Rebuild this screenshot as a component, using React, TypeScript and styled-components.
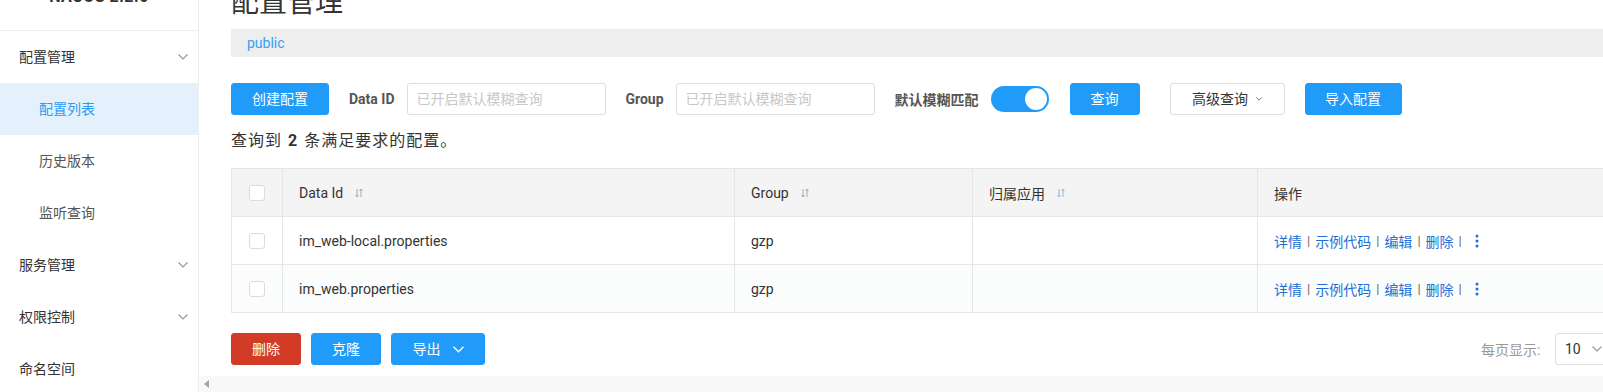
import React from "react";
import styled, { createGlobalStyle, css } from "styled-components";

const GlobalStyle = createGlobalStyle`
  html, body { margin: 0; padding: 0; background: #fff; }
  body {
    font-family: Roboto, "Noto Sans CJK SC", sans-serif;
    font-size: 14px;
    color: #333;
    overflow: hidden;
  }
  * { box-sizing: border-box; }
`;

const PRIMARY = "#209bfa";

const Page = styled.div`
  display: flex;
  width: 1603px;
  height: 392px;
  overflow: hidden;
`;

const Sidebar = styled.nav`
  width: 199px;
  flex-shrink: 0;
  border-right: 1px solid #eee;
  display: flex;
  flex-direction: column;
  overflow: hidden;
`;

const Brand = styled.div`
  height: 61px;
  margin-top: -30px;
  flex-shrink: 0;
  border-bottom: 1px solid #eee;
  display: flex;
  align-items: center;
  justify-content: center;
  padding-bottom: 8px;
  font-size: 16px;
  font-weight: 700;
  letter-spacing: 0.5px;
  color: #333;
`;

const MenuItem = styled.div<{ $sub?: boolean; $active?: boolean }>`
  height: 52px;
  flex-shrink: 0;
  display: flex;
  align-items: center;
  justify-content: space-between;
  padding-left: ${(p) => (p.$sub ? 39 : 19)}px;
  padding-right: 10px;
  font-size: 14px;
  line-height: 20px;
  color: ${(p) => (p.$active ? "#2d9cf6" : p.$sub ? "#555" : "#333")};
  background: ${(p) => (p.$active ? "#e4f1fc" : "transparent")};
`;

const Main = styled.main`
  flex: 1;
  min-width: 0;
  display: flex;
  flex-direction: column;
  overflow: hidden;
`;

const ScrollArea = styled.div`
  flex: 1;
  overflow: hidden;
  padding-left: 32px;
`;

const Inner = styled.div`
  width: 1500px;
  display: flex;
  flex-direction: column;
`;

const Title = styled.h1`
  margin: -15px 0 0;
  font-size: 28px;
  line-height: 36px;
  font-weight: 400;
  color: #333;
`;

const NamespaceBar = styled.div`
  margin-top: 8px;
  height: 28px;
  background: #eee;
  display: flex;
  align-items: center;
  padding-left: 16px;
  font-size: 14px;
  color: #33a0f7;
  width: 1400px;
`;

const Toolbar = styled.div`
  margin-top: 26px;
  height: 32px;
  display: flex;
  align-items: center;
`;

const Button = styled.button<{ $variant?: "primary" | "normal" | "danger"; $w: number; $ml?: number }>`
  width: ${(p) => p.$w}px;
  height: 32px;
  margin-left: ${(p) => p.$ml ?? 0}px;
  flex-shrink: 0;
  border-radius: 3px;
  font-family: inherit;
  font-size: 14px;
  line-height: 20px;
  padding: 0;
  display: inline-flex;
  align-items: center;
  justify-content: center;
  cursor: pointer;
  ${(p) =>
    p.$variant === "normal"
      ? css`
          background: #fff;
          border: 1px solid #ddd;
          color: #333;
        `
      : p.$variant === "danger"
      ? css`
          background: #d23c27;
          border: 1px solid #d23c27;
          color: #fff;
        `
      : css`
          background: ${PRIMARY};
          border: 1px solid ${PRIMARY};
          color: #fff;
        `}
`;

const Label = styled.span<{ $ml: number }>`
  margin-left: ${(p) => p.$ml}px;
  margin-right: 12px;
  font-size: 14px;
  font-weight: 700;
  color: #555;
  white-space: nowrap;
`;

const Input = styled.input`
  width: 199px;
  height: 32px;
  border: 1px solid #ddd;
  border-radius: 3px;
  padding: 0 9px;
  font-family: inherit;
  font-size: 14px;
  color: #333;
  outline: none;
  &::placeholder { color: #c8c8c8; }
`;

const Toggle = styled.div`
  width: 58px;
  height: 26px;
  border-radius: 13px;
  background: ${PRIMARY};
  display: flex;
  align-items: center;
  justify-content: flex-end;
  padding: 0 2px;
`;

const Knob = styled.span`
  width: 22px;
  height: 22px;
  border-radius: 50%;
  background: #fff;
`;

const BtnIcon = styled.svg<{ $gap: number }>`
  margin-left: ${(p) => p.$gap}px;
`;

const Summary = styled.div`
  margin-top: 14px;
  font-size: 16px;
  line-height: 24px;
  letter-spacing: 1px;
  color: #333;
  strong { font-weight: 700; margin: 0 1px; }
`;

const Table = styled.table`
  margin-top: 15px;
  width: 1500px;
  table-layout: fixed;
  border-collapse: collapse;
  border: 1px solid #e6e6e6;
`;

const Th = styled.th`
  height: 48px;
  background: #f4f4f4;
  border: 1px solid #e6e6e6;
  text-align: left;
  font-weight: 400;
  font-size: 14px;
  color: #333;
  padding: 0 16px;
`;

const Tr = styled.tr<{ $alt?: boolean }>`
  background: ${(p) => (p.$alt ? "#fbfcfc" : "#fff")};
`;

const Td = styled.td`
  height: 48px;
  border: 1px solid #e6e6e6;
  padding: 0 16px;
  font-size: 14px;
  color: #333;
  white-space: nowrap;
`;

const CheckCell = styled.div`
  display: flex;
  justify-content: center;
  margin: 0 -16px;
`;

const Checkbox = styled.span`
  width: 16px;
  height: 16px;
  border: 1px solid #dcdcdc;
  border-radius: 3px;
  background: #fff;
`;

const HeadInner = styled.span`
  display: inline-flex;
  align-items: center;
  gap: 12px;
`;

const Ops = styled.div`
  display: flex;
  align-items: center;
  color: #1f6fd4;
  font-size: 14px;
`;

const Sep = styled.span`
  color: #666;
  margin: 0 5px;
  font-size: 13px;
`;

const BottomBar = styled.div`
  margin-top: 20px;
  width: 1500px;
  display: flex;
  justify-content: space-between;
  align-items: center;
`;

const ButtonGroup = styled.div`
  display: flex;
  align-items: center;
`;

const Pager = styled.div`
  display: flex;
  align-items: center;
  width: 250px;
`;

const PagerLabel = styled.span`
  color: #999;
  font-size: 14px;
  width: 74px;
  white-space: nowrap;
`;

const Select = styled.div`
  width: 56px;
  height: 32px;
  flex-shrink: 0;
  border: 1px solid #ddd;
  border-radius: 3px;
  display: flex;
  align-items: center;
  justify-content: space-between;
  padding: 0 8px 0 9px;
  font-size: 14px;
  color: #333;
`;

const PageNums = styled.div`
  margin-left: 16px;
  display: flex;
  gap: 4px;
`;

const PageBtn = styled.span<{ $active?: boolean }>`
  width: 32px;
  height: 32px;
  border: 1px solid ${(p) => (p.$active ? PRIMARY : "#ddd")};
  border-radius: 3px;
  display: flex;
  align-items: center;
  justify-content: center;
  color: ${(p) => (p.$active ? PRIMARY : "#333")};
`;

const HScrollbar = styled.div`
  height: 16px;
  flex-shrink: 0;
  background: #f8f8f8;
  display: flex;
  align-items: center;
  padding-left: 5px;
`;

const ArrowLeft = styled.span`
  width: 0;
  height: 0;
  border-top: 4px solid transparent;
  border-bottom: 4px solid transparent;
  border-right: 5px solid #a3a3a3;
`;

const Chevron = ({ color = "#999", w = 10, h = 6, stroke = 1.2 }: { color?: string; w?: number; h?: number; stroke?: number }) => (
  <svg width={w} height={h} viewBox="0 0 10 6" fill="none">
    <polyline points="0.5,0.5 5,5 9.5,0.5" stroke={color} strokeWidth={stroke} />
  </svg>
);

const SortIcon = ({ color = "#aab" }: { color?: string }) => (
  <svg width="8" height="10" viewBox="0 0 8 10" fill="none">
    <line x1="2" y1="1" x2="2" y2="9" stroke={color} strokeWidth="1" />
    <polyline points="0.5,7 2,9 3.5,7" stroke={color} strokeWidth="1" />
    <line x1="6" y1="1" x2="6" y2="9" stroke={color} strokeWidth="1" />
    <polyline points="4.5,3 6,1 7.5,3" stroke={color} strokeWidth="1" />
  </svg>
);

const MoreIcon = () => (
  <svg width="4" height="14" viewBox="0 0 4 14" style={{ marginLeft: 8 }}>
    <circle cx="2" cy="2" r="1.5" fill="#1f6fd4" />
    <circle cx="2" cy="7" r="1.5" fill="#1f6fd4" />
    <circle cx="2" cy="12" r="1.5" fill="#1f6fd4" />
  </svg>
);

const rows = [
  { id: "im_web-local.properties", group: "gzp" },
  { id: "im_web.properties", group: "gzp" },
];

export default function App() {
  return (
    <>
      <GlobalStyle />
      <Page>
        <Sidebar>
          <Brand>NACOS 2.2.0</Brand>
          <MenuItem>
            配置管理 <Chevron />
          </MenuItem>
          <MenuItem $sub $active>配置列表</MenuItem>
          <MenuItem $sub>历史版本</MenuItem>
          <MenuItem $sub>监听查询</MenuItem>
          <MenuItem>
            服务管理 <Chevron />
          </MenuItem>
          <MenuItem>
            权限控制 <Chevron />
          </MenuItem>
          <MenuItem>命名空间</MenuItem>
        </Sidebar>
        <Main>
          <ScrollArea>
            <Inner>
              <Title>配置管理</Title>
              <NamespaceBar>public</NamespaceBar>
              <Toolbar>
                <Button $w={98}>创建配置</Button>
                <Label $ml={20}>Data ID</Label>
                <Input placeholder="已开启默认模糊查询" />
                <Label $ml={20}>Group</Label>
                <Input placeholder="已开启默认模糊查询" />
                <Label $ml={20}>默认模糊匹配</Label>
                <Toggle>
                  <Knob />
                </Toggle>
                <Button $w={70} $ml={21}>查询</Button>
                <Button $w={115} $ml={30} $variant="normal">
                  高级查询
                  <BtnIcon $gap={8} width="6" height="4" viewBox="0 0 10 6" fill="none">
                    <polyline points="0.5,0.5 5,5 9.5,0.5" stroke="#666" strokeWidth="1.5" />
                  </BtnIcon>
                </Button>
                <Button $w={97} $ml={20}>导入配置</Button>
              </Toolbar>
              <Summary>
                查询到 <strong>2</strong> 条满足要求的配置。
              </Summary>
              <Table>
                <colgroup>
                  <col style={{ width: 51 }} />
                  <col style={{ width: 452 }} />
                  <col style={{ width: 238 }} />
                  <col style={{ width: 285 }} />
                  <col />
                </colgroup>
                <thead>
                  <tr>
                    <Th>
                      <CheckCell>
                        <Checkbox />
                      </CheckCell>
                    </Th>
                    <Th>
                      <HeadInner>
                        Data Id <SortIcon color="#aaa" />
                      </HeadInner>
                    </Th>
                    <Th>
                      <HeadInner>
                        Group <SortIcon color="#aaa" />
                      </HeadInner>
                    </Th>
                    <Th>
                      <HeadInner>
                        归属应用 <SortIcon color="#9ab8d8" />
                      </HeadInner>
                    </Th>
                    <Th>操作</Th>
                  </tr>
                </thead>
                <tbody>
                  {rows.map((r, i) => (
                    <Tr key={r.id} $alt={i % 2 === 1}>
                      <Td>
                        <CheckCell>
                          <Checkbox />
                        </CheckCell>
                      </Td>
                      <Td>{r.id}</Td>
                      <Td>{r.group}</Td>
                      <Td></Td>
                      <Td>
                        <Ops>
                          详情<Sep>|</Sep>示例代码<Sep>|</Sep>编辑<Sep>|</Sep>删除<Sep>|</Sep>
                          <MoreIcon />
                        </Ops>
                      </Td>
                    </Tr>
                  ))}
                </tbody>
              </Table>
              <BottomBar>
                <ButtonGroup>
                  <Button $w={70} $variant="danger">删除</Button>
                  <Button $w={70} $ml={10}>克隆</Button>
                  <Button $w={94} $ml={10}>
                    导出
                    <BtnIcon $gap={12} width="11" height="7" viewBox="0 0 10 6" fill="none">
                      <polyline points="0.5,0.5 5,5 9.5,0.5" stroke="#fff" strokeWidth="1.3" />
                    </BtnIcon>
                  </Button>
                </ButtonGroup>
                <Pager>
                  <PagerLabel>每页显示:</PagerLabel>
                  <Select>
                    10 <Chevron color="#999" />
                  </Select>
                  <PageNums>
                    <PageBtn $active>1</PageBtn>
                  </PageNums>
                </Pager>
              </BottomBar>
            </Inner>
          </ScrollArea>
          <HScrollbar>
            <ArrowLeft />
          </HScrollbar>
        </Main>
      </Page>
    </>
  );
}
